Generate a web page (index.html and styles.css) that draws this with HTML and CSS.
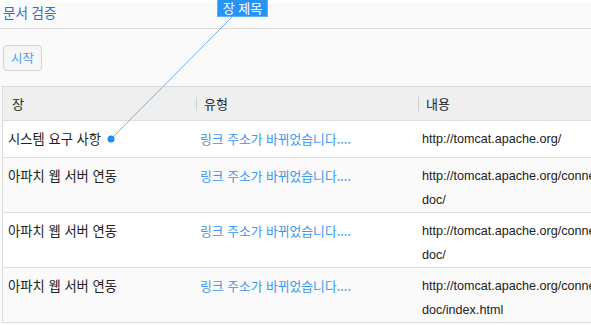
FILE: index.html
```html
<!DOCTYPE html>
<html lang="ko">
<head>
<meta charset="utf-8">
<title>문서 검증</title>
<link rel="stylesheet" href="styles.css">
</head>
<body>
<div class="page">
  <header class="titlebar">문서 검증</header>
  <div class="toolbar">
    <button class="btn" type="button">시작</button>
  </div>
  <div class="table">
    <div class="thead">
      <div class="th">장</div>
      <div class="th sep">유형</div>
      <div class="th sep">내용</div>
    </div>
    <div class="row odd">
      <div class="td">시스템 요구 사항</div>
      <div class="td link">링크 주소가 바뀌었습니다....</div>
      <div class="td url">http://tomcat.apache.org/</div>
    </div>
    <div class="row even">
      <div class="td">아파치 웹 서버 연동</div>
      <div class="td link">링크 주소가 바뀌었습니다....</div>
      <div class="td url">http://tomcat.apache.org/connectors-doc/</div>
    </div>
    <div class="row odd">
      <div class="td">아파치 웹 서버 연동</div>
      <div class="td link">링크 주소가 바뀌었습니다....</div>
      <div class="td url">http://tomcat.apache.org/connectors-doc/</div>
    </div>
    <div class="row even">
      <div class="td">아파치 웹 서버 연동</div>
      <div class="td link">링크 주소가 바뀌었습니다....</div>
      <div class="td url">http://tomcat.apache.org/connectors-doc/index.html</div>
    </div>
  </div>

  <div class="tip">장 제목</div>
  <svg class="callout" width="591" height="325" viewBox="0 0 591 325">
    <line x1="232" y1="17" x2="111" y2="139" stroke="#6ab4f5" stroke-width="1"/>
    <circle cx="111" cy="139" r="3.5" fill="#1e8ff0"/>
  </svg>
</div>
</body>
</html>
```
FILE: styles.css
```css
html, body {
  margin: 0;
  padding: 0;
  overflow: hidden;
  background: #fafafa;
}
.page {
  position: relative;
  width: 591px;
  height: 325px;
  overflow: hidden;
  font-family: "Noto Sans CJK KR", "Noto Sans", sans-serif;
  color: #222;
}
.titlebar {
  box-sizing: border-box;
  height: 29px;
  line-height: 25px;
  padding-left: 3px;
  font-size: 13.5px;
  color: #2d6fcc;
  border-bottom: 1px solid #dcdcdc;
  background: linear-gradient(#ffffff 0, #ffffff 3px, #fafafa 3px);
}
.toolbar {
  display: flex;
  padding: 16px 0 15px 3px;
}
.btn {
  font-family: inherit;
  font-size: 12.5px;
  line-height: 24px;
  height: 26px;
  padding: 0 7px;
  margin: 0;
  color: #4a9ff5;
  background: #f6f6f6;
  border: 1px solid #d4d4d4;
  border-radius: 4px;
}
.table {
  margin-left: 2px;
  width: 700px;
  border-left: 1px solid #dcdcdc;
  border-top: 1px solid #dcdcdc;
}
.thead, .row {
  display: grid;
  grid-template-columns: 193px 222px 218px;
}
.thead {
  height: 33px;
  background: #efefef;
  border-bottom: 1px solid #dedede;
}
.th {
  display: flex;
  align-items: center;
  font-size: 13px;
  color: #222;
  padding-left: 9px;
}
.th.sep {
  padding-left: 0;
}
.th.sep::before {
  content: "";
  width: 1px;
  height: 14px;
  background: #cfcfcf;
  margin-right: 7px;
}
.row {
  min-height: 36px;
  border-bottom: 1px solid #dedede;
}
.row.odd { background: #ffffff; }
.row.even { background: #fafafa; }
.td {
  padding: 6px 4px 0 4px;
  line-height: 24px;
  font-size: 13.3px;
}
.td:first-child { padding-left: 5px; }
.td.link {
  font-size: 12.8px;
  color: #3a97ee;
}
.td.url {
  font-family: "Liberation Sans", "Noto Sans", sans-serif;
  font-size: 12.6px;
  color: #222;
}
.tip {
  position: absolute;
  left: 217px;
  top: 0;
  width: 51px;
  height: 17px;
  box-sizing: border-box;
  background: #2793f2;
  border: 1px solid #5aaef7;
  border-top: none;
  color: #fff;
  font-size: 13px;
  line-height: 15px;
  text-align: center;
}
.callout {
  position: absolute;
  left: 0;
  top: 0;
  pointer-events: none;
}
```
